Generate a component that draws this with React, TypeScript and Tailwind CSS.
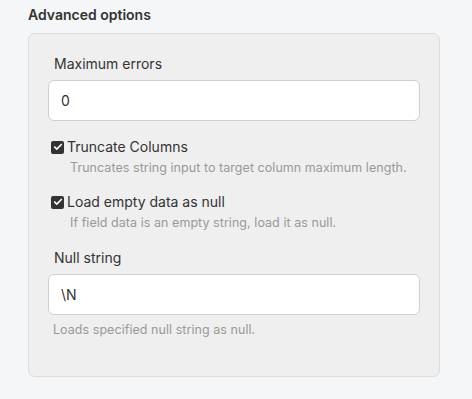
import { Check } from 'lucide-react'

function CheckRow({ label, hint }: { label: string; hint: string }) {
  return (
    <div className="ml-[3px]">
      <div className="flex items-center gap-[3px]">
        <span className="flex h-[13px] w-[13px] items-center justify-center rounded-[2px] bg-[#333]">
          <Check className="h-[10px] w-[10px] text-white" strokeWidth={4} />
        </span>
        <span className="text-[14px] leading-[20px] text-[#333]">{label}</span>
      </div>
      <p className="ml-[19px] mt-[2px] text-[12.5px] leading-[18px] tracking-[0.05px] text-[#999]">{hint}</p>
    </div>
  )
}

export default function App() {
  return (
    <div
      className="min-h-[399px] w-[472px] bg-[#f5f6f7] px-[28px] pt-[5px]"
      style={{ fontFamily: 'Inter, "Noto Sans", sans-serif' }}
    >
      <h2 className="text-[14px] font-semibold leading-[20px] text-[#333]">Advanced options</h2>
      <div className="mt-[8px] w-[412px] rounded-[7px] border border-[#dcdcdc] bg-[#efefef] px-[19px] pb-[37px] pt-[20px]">
        <label className="ml-[6px] block text-[14px] leading-[20px] text-[#333]">Maximum errors</label>
        <input
          readOnly
          value="0"
          className="mt-[6px] block h-[41px] w-full rounded-[6px] border border-[#cfcfcf] bg-white px-[12px] text-[14px] text-[#333] outline-none"
        />
        <div className="mt-[16px] flex flex-col gap-[15px]">
          <CheckRow label="Truncate Columns" hint="Truncates string input to target column maximum length." />
          <CheckRow label="Load empty data as null" hint="If field data is an empty string, load it as null." />
        </div>
        <label className="ml-[6px] mt-[16px] block text-[14px] leading-[20px] text-[#333]">Null string</label>
        <input
          readOnly
          value="\N"
          className="mt-[6px] block h-[41px] w-full rounded-[6px] border border-[#cfcfcf] bg-white px-[12px] text-[14px] text-[#333] outline-none"
        />
        <p className="ml-[5px] mt-[6px] text-[12.5px] leading-[18px] tracking-[0.05px] text-[#999]">Loads specified null string as null.</p>
      </div>
    </div>
  )
}
